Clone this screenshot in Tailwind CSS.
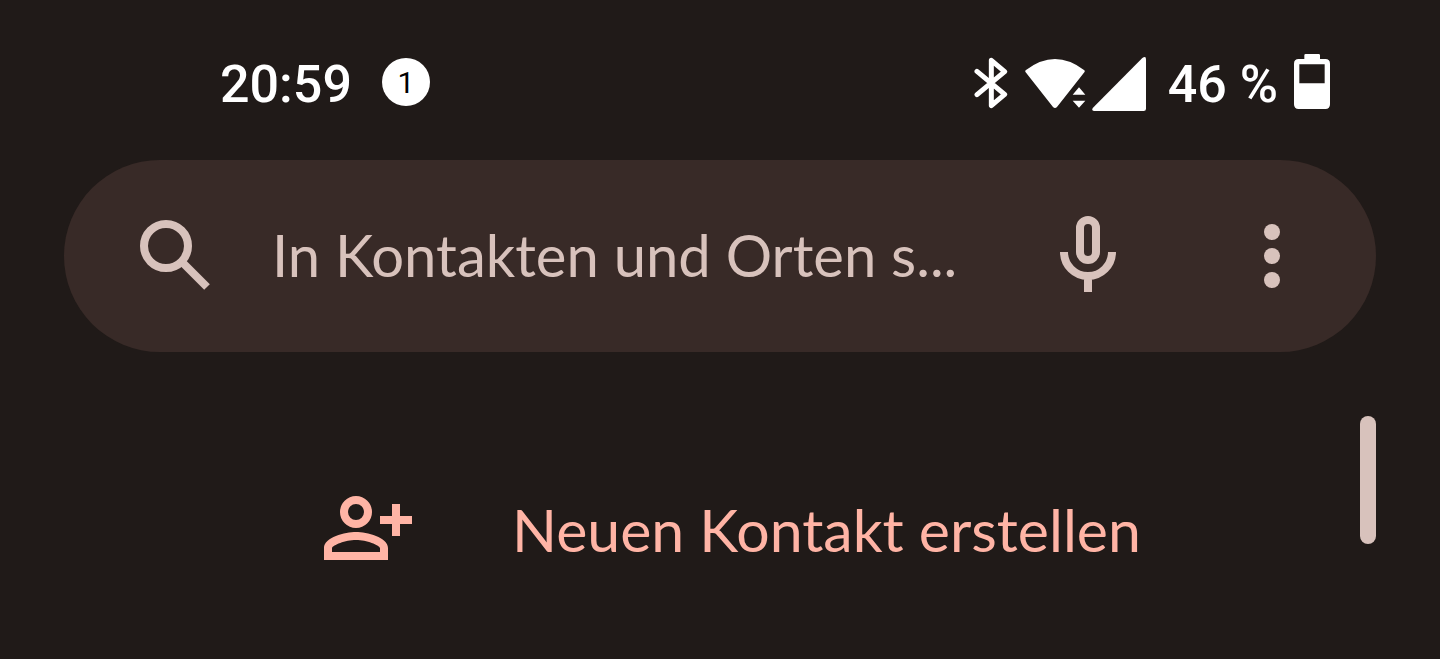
<!DOCTYPE html>
<html lang="de">

<head>
    <meta charset="UTF-8">
    <meta name="viewport" content="width=device-width, initial-scale=1.0">
    <script src="https://cdn.jsdelivr.net/npm/@tailwindcss/browser@4"></script>
    <title>Kontakte</title>
</head>

<body class="min-h-screen bg-[#201a18] font-['Lato',sans-serif]">
    <!-- status bar -->
    <header class="flex h-40 items-center justify-between pt-1 pr-[110px] pl-[220px] font-['Roboto',sans-serif] text-[52px] font-medium text-white">
        <div class="flex items-center gap-[30px]">
            <time class="pt-1.5">20:59</time>
            <span class="flex size-12 items-center justify-center rounded-full bg-white text-[30px] font-normal text-black">1</span>
        </div>
        <div class="flex items-center">
            <svg class="mr-4 h-[60px] w-[34px]" viewBox="42 36 102 180" fill="none" stroke="currentColor" stroke-width="15" stroke-linecap="round" stroke-linejoin="round" aria-label="Bluetooth">
                <path d="M51 94 134 163 94 197V61L134 95 51 164" />
            </svg>
            <svg class="mr-1.5 h-[60px] w-[62px]" viewBox="192 36 186 180" fill="currentColor" aria-label="WLAN">
                <path d="M197 97Q194 93 198 90 Q285 24 372 90 Q376 93 373 97L291 201Q285 207 279 201Z" />
                <path d="M357 142 376 164H338ZM338 182H376L357 203Z" />
            </svg>
            <svg class="mr-5.5 h-[60px] w-[54px]" viewBox="396 36 162 180" fill="currentColor" aria-label="Mobilfunk">
                <path d="M399 203 547 54Q558 46 558 58V206Q558 213 551 213H402Q393 211 399 203Z" />
            </svg>
            <span class="mr-4 pt-1.5">46 %</span>
            <svg class="h-[60px] w-9" viewBox="432 36 108 180" fill="currentColor" aria-label="Akku">
                <path fill-rule="evenodd" d="M467 42H506Q510 42 510 46V57H526Q540 57 540 71V193Q540 207 526 207H446Q432 207 432 193V71Q432 57 446 57H463V46Q463 42 467 42ZM448 73V130H524V73Z" />
            </svg>
        </div>
    </header>

    <!-- search -->
    <form role="search" class="mx-16 flex h-48 items-center rounded-full bg-[#382a27] pr-14 pl-16 text-[#d8c2bc]">
        <label for="search" aria-label="Suchen" class="mr-12 shrink-0">
            <svg class="size-24" viewBox="0 0 24 24" fill="none" stroke="currentColor" stroke-width="2">
                <circle cx="9.5" cy="9.5" r="5.5" />
                <path d="M13.5 13.5 19.75 19.75" />
            </svg>
        </label>
        <input id="search" type="text" placeholder="In Kontakten und Orten s..." class="min-w-0 flex-1 pb-1 text-[58px] outline-none placeholder:text-[#d8c2bc]">
        <button type="button" aria-label="Sprachsuche" class="mr-22 shrink-0">
            <svg class="size-24" viewBox="0 0 24 24" fill="none" stroke="currentColor" stroke-width="2">
                <rect x="10" y="3" width="4" height="10" rx="2" />
                <path d="M6 11a6 6 0 0 0 12 0M12 17v4" />
            </svg>
        </button>
        <button type="button" aria-label="Weitere Optionen" class="shrink-0">
            <svg class="size-24" viewBox="0 0 24 24" fill="currentColor">
                <circle cx="12" cy="6" r="2" />
                <circle cx="12" cy="12" r="2" />
                <circle cx="12" cy="18" r="2" />
            </svg>
        </button>
    </form>

    <!-- contact list -->
    <main class="flex pt-16 pr-16">
        <div class="flex-1 pt-16 pl-80">
            <a href="#" class="flex h-24 items-center gap-24 text-[59px] text-[#ffb4a5]">
                <svg class="size-24 shrink-0" viewBox="0 0 24 24" fill="currentColor">
                    <path fill-rule="evenodd" d="M9 4a4 4 0 1 0 0 8 4 4 0 0 0 0-8Zm0 2a2 2 0 1 1 0 4 2 2 0 0 1 0-4Z" />
                    <path fill-rule="evenodd" d="M9 13c-2.700 0-8 1.340-8 4v3h16v-3c0-2.660-5.300-4-8-4Zm6 5H3v-.990C3.200 16.290 6.300 15 9 15s5.800 1.290 6 2v1Z" />
                    <path d="M18 6h2v3h3v2h-3v3h-2v-3h-3V9h3Z" />
                </svg>
                <span class="pt-1">Neuen Kontakt erstellen</span>
            </a>
        </div>
        <div class="h-32 w-4 rounded-full bg-[#d8c2bc]"></div>
    </main>
</body>

</html>
